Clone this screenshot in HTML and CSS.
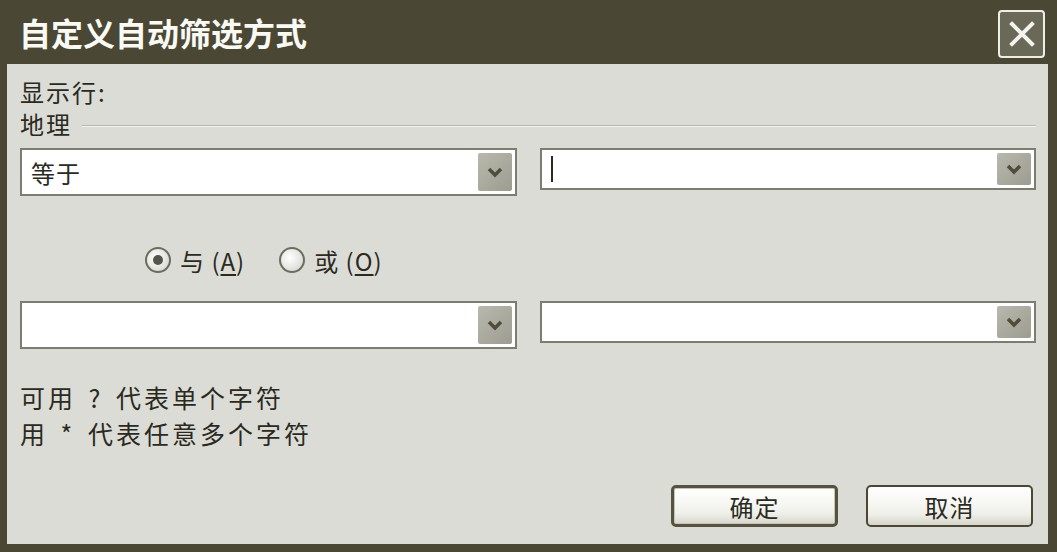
FILE: index.html
```html
<!DOCTYPE html>
<html lang="zh-CN">
<head>
  <meta charset="UTF-8">
  <title>自定义自动筛选方式</title>
  <link rel="stylesheet" href="styles.css">
</head>
<body>
  <div class="window">
    <div class="titlebar">
      <span class="title">自定义自动筛选方式</span>
      <div class="close">
        <svg width="30" height="30" viewBox="0 0 30 30">
          <path d="M5 5 L25 25 M25 5 L5 25" stroke="#f4f4ee" stroke-width="4" stroke-linecap="square"/>
        </svg>
      </div>
    </div>

    <div class="content">
      <div class="label">显示行:</div>
      <div class="group">
        <span>地理</span>
        <span class="rule"></span>
      </div>

      <div class="combo-row first">
        <div class="combo">
          <span class="combo-text">等于</span>
          <span class="drop"><svg width="16" height="12" viewBox="0 0 16 12"><path d="M2 3 L8 9 L14 3" fill="none" stroke="#4f4d3a" stroke-width="3.5"/></svg></span>
        </div>
        <div class="combo short">
          <span class="caret"></span>
          <span class="drop"><svg width="16" height="12" viewBox="0 0 16 12"><path d="M2 3 L8 9 L14 3" fill="none" stroke="#4f4d3a" stroke-width="3.5"/></svg></span>
        </div>
      </div>

      <div class="radios">
        <label class="radio"><span class="dot checked"></span><span>与 (<u>A</u>)</span></label>
        <label class="radio"><span class="dot"></span><span>或 (<u>O</u>)</span></label>
      </div>

      <div class="combo-row">
        <div class="combo">
          <span class="combo-text"></span>
          <span class="drop"><svg width="16" height="12" viewBox="0 0 16 12"><path d="M2 3 L8 9 L14 3" fill="none" stroke="#4f4d3a" stroke-width="3.5"/></svg></span>
        </div>
        <div class="combo short">
          <span class="combo-text"></span>
          <span class="drop"><svg width="16" height="12" viewBox="0 0 16 12"><path d="M2 3 L8 9 L14 3" fill="none" stroke="#4f4d3a" stroke-width="3.5"/></svg></span>
        </div>
      </div>

      <div class="hints">
        <p>可用 ? 代表单个字符</p>
        <p>用 * 代表任意多个字符</p>
      </div>

      <div class="buttons">
        <button class="btn default">确定</button>
        <button class="btn">取消</button>
      </div>
    </div>
  </div>
</body>
</html>
```

FILE: styles.css
```css
html, body {
  margin: 0;
  padding: 0;
}
body {
  width: 1057px;
  height: 552px;
  overflow: hidden;
  font-family: "Noto Sans CJK SC", "Liberation Sans", sans-serif;
  color: #2a2a1e;
}
.window {
  box-sizing: border-box;
  width: 1057px;
  height: 552px;
  background: #4a4835;
  padding: 0 9px 8px 7px;
  display: flex;
  flex-direction: column;
}
.titlebar {
  height: 64px;
  display: flex;
  align-items: center;
  justify-content: space-between;
  padding-left: 12px;
}
.title {
  color: #fafaf4;
  font-size: 32px;
  font-weight: bold;
  letter-spacing: 0;
  line-height: 1;
}
.close {
  box-sizing: border-box;
  width: 47px;
  height: 48px;
  margin-top: 4px;
  margin-right: 3px;
  border: 2px solid #eeeee4;
  border-radius: 4px;
  background: #6a6856;
  display: flex;
  align-items: center;
  justify-content: center;
}
.content {
  flex: 1;
  background: #dcdcd6;
  padding: 12px 12px 17px 13px;
  display: flex;
  flex-direction: column;
  font-size: 24px;
}
.label {
  line-height: 32px;
  letter-spacing: 2px;
}
.group {
  display: flex;
  align-items: center;
  line-height: 32px;
  letter-spacing: 2px;
}
.rule {
  flex: 1;
  height: 1px;
  background: #b8b8b0;
  border-bottom: 1px solid #f2f2ee;
  margin-left: 10px;
  margin-top: 4px;
}
.combo-row {
  display: flex;
  gap: 23px;
  margin-top: 26px;
}
.combo-row.first {
  margin-top: 8px;
}
.combo {
  box-sizing: border-box;
  width: 497px;
  height: 48px;
  background: #fff;
  border: 2px solid #7c7c70;
  display: flex;
  align-items: center;
  padding: 0 3px 0 9px;
}
.combo.short {
  width: 496px;
  height: 42px;
}
.combo-text {
  flex: 1;
  letter-spacing: 1px;
}
.caret {
  width: 2px;
  height: 26px;
  background: #2a2a1e;
  flex: none;
  margin-right: auto;
}
.drop {
  width: 34px;
  height: 38px;
  background: linear-gradient(135deg, #b8b8ae, #9c9c90);
  border-radius: 2px;
  display: flex;
  align-items: center;
  justify-content: center;
}
.combo.short .drop {
  height: 32px;
}
.radios {
  display: flex;
  align-items: center;
  gap: 34px;
  height: 30px;
  margin-top: 49px;
  padding-left: 125px;
}
.radio {
  display: flex;
  align-items: center;
  gap: 9px;
  font-size: 24px;
  letter-spacing: 1px;
}
.radio u {
  text-underline-offset: 3px;
}
.dot {
  box-sizing: border-box;
  width: 26px;
  height: 26px;
  border-radius: 50%;
  border: 2px solid #6c6c60;
  background: radial-gradient(circle at 40% 40%, #fff, #d0d0c8);
  display: flex;
  align-items: center;
  justify-content: center;
}
.dot.checked::after {
  content: "";
  width: 10px;
  height: 10px;
  border-radius: 50%;
  background: #55554a;
}
.hints {
  margin-top: 30px;
}
.hints p {
  margin: 0;
  line-height: 36px;
  font-size: 25px;
  letter-spacing: 3px;
  word-spacing: 4px;
}
.buttons {
  margin-top: auto;
  display: flex;
  justify-content: flex-end;
  gap: 28px;
  padding-right: 3px;
}
.btn {
  box-sizing: border-box;
  width: 167px;
  height: 42px;
  font-family: inherit;
  font-size: 24px;
  letter-spacing: 1px;
  color: #2a2a1e;
  background: linear-gradient(#ffffff, #f0f0ea 70%, #d6d6cc);
  border: 2px solid #4a4835;
  border-radius: 5px;
  padding: 0;
}
.btn.default {
  border: 3px solid #55533f;
  box-shadow: inset 0 0 0 1px #c4c4b8;
}
```
